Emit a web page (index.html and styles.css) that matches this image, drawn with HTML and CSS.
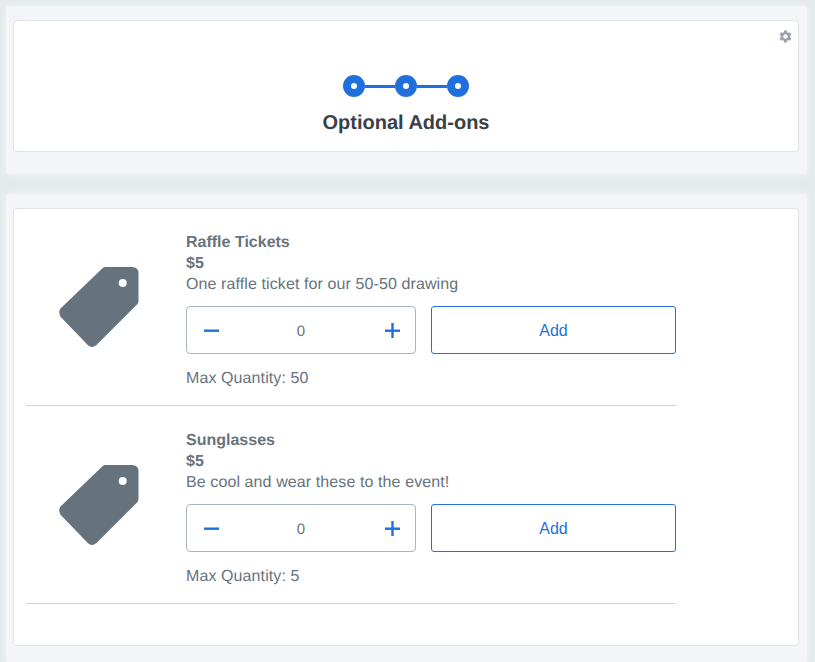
FILE: index.html
```html
<!DOCTYPE html>
<html lang="en">
<head>
<meta charset="utf-8">
<title>Optional Add-ons</title>
<link rel="stylesheet" href="styles.css">
</head>
<body>
<main class="page">
  <section class="panel">
    <div class="card header-card">
      <svg class="gear" viewBox="0 0 24 24" aria-hidden="true"><path d="M19.14 12.94c.04-.3.06-.61.06-.94 0-.32-.02-.64-.07-.94l2.03-1.58a.49.49 0 0 0 .12-.61l-1.92-3.32a.488.488 0 0 0-.59-.22l-2.39.96c-.5-.38-1.03-.7-1.62-.94l-.36-2.54a.484.484 0 0 0-.48-.41h-3.84c-.24 0-.43.17-.47.41l-.36 2.54c-.59.24-1.13.57-1.62.94l-2.39-.96c-.22-.08-.47 0-.59.22L2.74 8.87c-.12.21-.08.47.12.61l2.03 1.58c-.05.3-.09.63-.09.94s.02.64.07.94l-2.03 1.58a.49.49 0 0 0-.12.61l1.92 3.32c.12.22.37.29.59.22l2.39-.96c.5.38 1.03.7 1.62.94l.36 2.54c.05.24.24.41.48.41h3.84c.24 0 .44-.17.47-.41l.36-2.54c.59-.24 1.13-.56 1.62-.94l2.39.96c.22.08.47 0 .59-.22l1.92-3.32c.12-.22.07-.47-.12-.61l-2.01-1.58zM12 15.6c-1.98 0-3.6-1.62-3.6-3.6s1.62-3.6 3.6-3.6 3.6 1.62 3.6 3.6-1.62 3.6-3.6 3.6z"/></svg>
      <div class="steps">
        <span class="step"></span><span class="link"></span>
        <span class="step"></span><span class="link"></span>
        <span class="step"></span>
      </div>
      <h1 class="title">Optional Add-ons</h1>
    </div>
  </section>

  <section class="panel panel-items">
    <div class="card items-card">
      <article class="item">
        <div class="item-icon">
          <svg class="tag" viewBox="0 0 80 80" aria-hidden="true"><path fill-rule="evenodd" d="M43.5 1.2Q44.7 0 46.5 0H73Q79.5 0 79.5 6.5V34Q79.5 36 78 37.5L37.2 78.3Q33 81.6 29 78.3L1.5 49.8Q-1 45 1.5 41.5ZM63.7 12a4 4 0 1 0 0 8 4 4 0 0 0 0-8Z"/></svg>
        </div>
        <div class="item-body">
          <div class="item-name">Raffle Tickets</div>
          <div class="item-price">$5</div>
          <div class="item-desc">One raffle ticket for our 50-50 drawing</div>
          <div class="controls">
            <div class="stepper">
              <svg class="stepper-icon" viewBox="0 0 15 15" aria-hidden="true"><rect x="0" y="6.5" width="15" height="2.4"/></svg>
              <span class="qty">0</span>
              <svg class="stepper-icon" viewBox="0 0 15 15" aria-hidden="true"><rect x="0" y="6.5" width="15" height="2.4"/><rect x="6.3" y="0" width="2.4" height="15"/></svg>
            </div>
            <button class="add" type="button">Add</button>
          </div>
          <div class="item-max">Max Quantity: 50</div>
        </div>
      </article>
      <article class="item">
        <div class="item-icon">
          <svg class="tag" viewBox="0 0 80 80" aria-hidden="true"><path fill-rule="evenodd" d="M43.5 1.2Q44.7 0 46.5 0H73Q79.5 0 79.5 6.5V34Q79.5 36 78 37.5L37.2 78.3Q33 81.6 29 78.3L1.5 49.8Q-1 45 1.5 41.5ZM63.7 12a4 4 0 1 0 0 8 4 4 0 0 0 0-8Z"/></svg>
        </div>
        <div class="item-body">
          <div class="item-name">Sunglasses</div>
          <div class="item-price">$5</div>
          <div class="item-desc">Be cool and wear these to the event!</div>
          <div class="controls">
            <div class="stepper">
              <svg class="stepper-icon" viewBox="0 0 15 15" aria-hidden="true"><rect x="0" y="6.5" width="15" height="2.4"/></svg>
              <span class="qty">0</span>
              <svg class="stepper-icon" viewBox="0 0 15 15" aria-hidden="true"><rect x="0" y="6.5" width="15" height="2.4"/><rect x="6.3" y="0" width="2.4" height="15"/></svg>
            </div>
            <button class="add" type="button">Add</button>
          </div>
          <div class="item-max">Max Quantity: 5</div>
        </div>
      </article>
    </div>
  </section>
</main>
</body>
</html>
```

FILE: styles.css
```css
* { box-sizing: border-box; }

html, body {
  margin: 0;
  height: 100%;
}

body {
  background: #e5eaed;
  font-family: "Liberation Sans", Arial, sans-serif;
  color: #68737d;
  overflow: hidden;
  text-rendering: geometricPrecision;
}

.page {
  display: flex;
  flex-direction: column;
  gap: 20px;
  padding: 6px 8px 0 6px;
}

.panel {
  background: #f4f5f7;
  box-shadow: 0 0 4px 1px #f0f2f4;
  border-radius: 3px;
  padding: 14px 8px 22px 7px;
}

.panel-items {
  padding-bottom: 16px;
}

.card {
  position: relative;
  background: #fff;
  border: 1px solid #e0e3e8;
  border-radius: 4px;
}

.header-card {
  height: 132px;
  display: flex;
  flex-direction: column;
  align-items: center;
  padding-top: 54px;
}

.gear {
  position: absolute;
  top: 8px;
  right: 5px;
  width: 15px;
  height: 15px;
  fill: #9aa3ab;
}

.steps {
  display: flex;
  align-items: center;
  height: 22px;
}

.step {
  width: 22px;
  height: 22px;
  border-radius: 50%;
  border: 8px solid #1f6fdc;
  background: #fff;
}

.link {
  width: 30px;
  height: 3px;
  background: #1f6fdc;
}

.title {
  margin: 14px 0 0;
  font-size: 20px;
  line-height: 24px;
  font-weight: 700;
  color: #3a4047;
}

.items-card {
  height: 438px;
  padding: 0 12px;
}

.item {
  display: flex;
  width: 650px;
  height: 198px;
  padding-top: 24px;
  border-bottom: 1px solid #d2d4d6;
}

.item:first-child {
  height: 197px;
  padding-top: 23px;
}

.item-icon {
  flex: none;
  width: 160px;
  padding: 35px 0 0 33px;
}

.tag {
  display: block;
  width: 80px;
  height: 80px;
  fill: #66727c;
}

.item-body {
  flex: 1;
  font-size: 16px;
  line-height: 21px;
  letter-spacing: 0.1px;
}

.item-name,
.item-price {
  font-weight: 700;
  letter-spacing: 0;
}

.controls {
  display: flex;
  gap: 15px;
  margin-top: 11px;
}

.stepper {
  width: 230px;
  height: 48px;
  display: flex;
  align-items: center;
  justify-content: space-between;
  padding: 0 15px 0 17px;
  border: 1px solid #a9b4bc;
  border-radius: 4px;
  background: #fff;
}

.stepper-icon {
  width: 15px;
  height: 15px;
  fill: #1f6fdc;
}

.qty {
  font-size: 15px;
  padding: 3px 2px 0 0;
}

.add {
  width: 245px;
  height: 48px;
  padding: 1px 0 0;
  border: 1px solid #1f6fdc;
  border-radius: 3px;
  background: #fff;
  color: #1f6fdc;
  font: 16px "Liberation Sans", Arial, sans-serif;
}

.item-max {
  margin-top: 14px;
}
```
